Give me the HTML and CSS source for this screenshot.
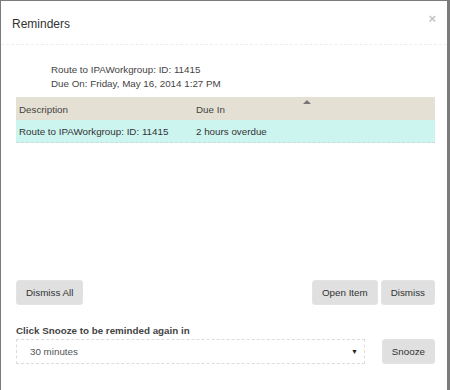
FILE: index.html
```html
<!DOCTYPE html>
<html lang="en">
<head>
  <meta charset="UTF-8">
  <title>Reminders</title>
  <link rel="stylesheet" href="styles.css">
</head>
<body>
  <div class="modal">
    <div class="modal-header">
      <h4>Reminders</h4>
      <span class="close">&times;</span>
    </div>
    <div class="modal-body">
      <div class="info">
        <div>Route to IPAWorkgroup: ID: 11415</div>
        <div>Due On: Friday, May 16, 2014 1:27 PM</div>
      </div>
      <table class="grid">
        <thead>
          <tr>
            <th class="col-desc">Description</th>
            <th>Due In <span class="sort"></span></th>
          </tr>
        </thead>
        <tbody>
          <tr class="selected">
            <td>Route to IPAWorkgroup: ID: 11415</td>
            <td>2 hours overdue</td>
          </tr>
        </tbody>
      </table>
      <div class="spacer"></div>
      <div class="actions">
        <button class="btn">Dismiss All</button>
        <div class="right">
          <button class="btn">Open Item</button>
          <button class="btn">Dismiss</button>
        </div>
      </div>
      <label class="snooze-label">Click Snooze to be reminded again in</label>
      <div class="snooze">
        <div class="select">
          <span>30 minutes</span>
          <span class="caret">&#9660;</span>
        </div>
        <button class="btn">Snooze</button>
      </div>
    </div>
  </div>
</body>
</html>
```

FILE: styles.css
```css
html, body {
  margin: 0;
  height: 100%;
}
body {
  background: #7b7b7b;
  font-family: "Liberation Sans", Arial, sans-serif;
  font-size: 9.8px;
  color: #333;
  overflow: hidden;
}
.modal {
  background: #fff;
  margin: 1px 3px 0 1px;
  height: calc(100% - 1px);
  display: flex;
  flex-direction: column;
}
.modal-header {
  height: 43px;
  padding: 0 12px 0 11px;
  display: flex;
  align-items: center;
  justify-content: space-between;
  border-bottom: 1px dashed #efeee6;
}
.modal-header h4 {
  margin: 0;
  font-size: 12px;
  font-weight: normal;
  color: #333;
  position: relative;
  top: 1px;
}
.close {
  color: #c4c4c4;
  font-size: 13px;
  font-weight: bold;
  position: relative;
  top: -4px;
  left: 1px;
}
.modal-body {
  flex: 1;
  display: flex;
  flex-direction: column;
  padding: 18px 12px 26px 15px;
}
.info {
  padding-left: 35px;
  line-height: 14px;
  color: #444;
}
.grid {
  margin-top: 6px;
  width: 100%;
  border-collapse: collapse;
}
.grid th {
  background: #e4e0d3;
  font-weight: normal;
  text-align: left;
  height: 22px;
  padding: 1px 3px 0;
  position: relative;
  color: #444;
}
.grid .col-desc {
  width: 171px;
}
.sort {
  position: absolute;
  left: 110px;
  top: 3px;
  border-left: 4px solid transparent;
  border-right: 4px solid transparent;
  border-bottom: 4px solid #777;
}
.grid td {
  background: #cdf5f0;
  height: 22px;
  padding: 0 3px;
  border-bottom: 1px dashed #c9dcd8;
  color: #333;
}
.spacer {
  flex: 1;
}
.actions {
  display: flex;
  justify-content: space-between;
}
.right {
  display: flex;
  gap: 3px;
}
.btn {
  font-family: inherit;
  font-size: 9.8px;
  color: #333;
  background: #e0e0e0;
  border: 1px solid #e3e3e3;
  border-radius: 3px;
  height: 25px;
  padding: 0 9px;
}
.snooze-label {
  font-weight: bold;
  color: #444;
  margin-top: 20px;
  margin-bottom: 3px;
}
.snooze {
  display: flex;
  justify-content: space-between;
}
.select {
  width: 349px;
  height: 25px;
  box-sizing: border-box;
  border: 1px dashed #dcdcdc;
  display: flex;
  align-items: center;
  justify-content: space-between;
  padding: 0 6px 0 13px;
  color: #555;
}
.caret {
  font-size: 7px;
  color: #222;
}
```
